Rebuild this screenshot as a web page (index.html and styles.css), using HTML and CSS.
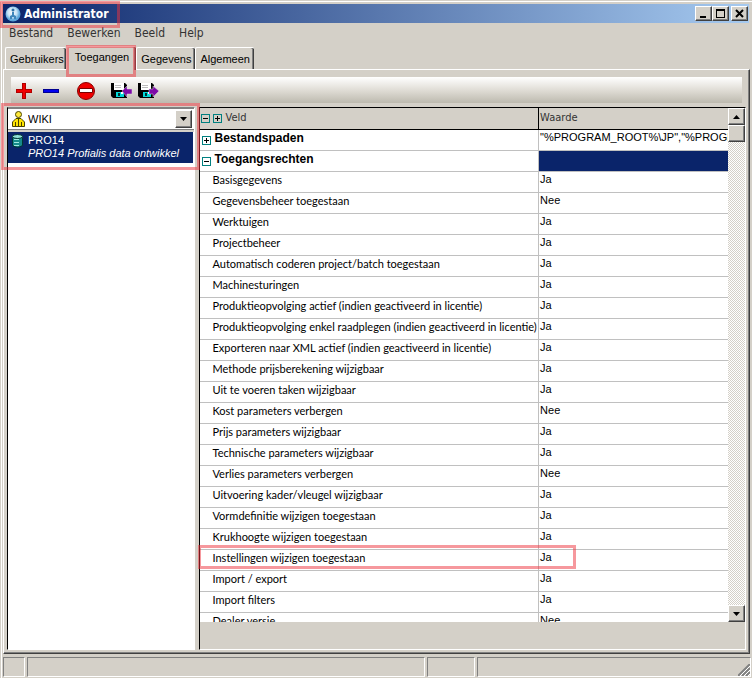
FILE: index.html
```html
<!DOCTYPE html>
<html lang="nl">
<head>
<meta charset="utf-8">
<title>Administrator</title>
<link rel="stylesheet" href="styles.css">
</head>
<body>
<div class="window">
  <header class="titlebar">
    <svg class="app-icon" width="16" height="16" viewBox="0 0 16 16"><defs><radialGradient id="orb" cx="45%" cy="40%"><stop offset="0" stop-color="#fff"/><stop offset=".6" stop-color="#c4e2f6"/><stop offset="1" stop-color="#5aa5da"/></radialGradient></defs><circle cx="8" cy="8" r="7.500" fill="url(#orb)"/><circle cx="8" cy="4" r="1.500" fill="#2b72a8"/><path d="M7 6h2v3l2 1v3H9v-2H7v2H5v-3l2-1z" fill="#3f86ba"/></svg>
    <h1>Administrator</h1>
    <div class="window-buttons">
      <button type="button" aria-label="Minimaliseren"><svg width="12" height="10" viewBox="0 0 12 10"><path d="M2 7h6v2H2z"/></svg></button>
      <button type="button" aria-label="Maximaliseren"><svg width="12" height="10" viewBox="0 0 12 10"><path d="M1 0h9v9H1zM2 2v6h7V2z" fill-rule="evenodd"/></svg></button>
      <button type="button" class="close" aria-label="Sluiten"><svg width="12" height="10" viewBox="0 0 12 10"><path d="M2 1l7 7M9 1L2 8" stroke="#000" stroke-width="2"/></svg></button>
    </div>
    <span class="mark mark-title"></span>
  </header>

  <nav class="menubar">
    <button type="button">Bestand</button>
    <button type="button">Bewerken</button>
    <button type="button">Beeld</button>
    <button type="button">Help</button>
  </nav>

  <div class="tabs" role="tablist">
    <button type="button" role="tab">Gebruikers</button>
    <button type="button" role="tab" class="active" aria-selected="true">Toegangen<span class="mark mark-tab"></span></button>
    <button type="button" role="tab">Gegevens</button>
    <button type="button" role="tab">Algemeen</button>
  </div>

  <main class="page">
    <div class="toolbar">
      <button type="button" aria-label="Toevoegen"><svg width="18" height="18" viewBox="0 0 18 18"><path d="M7 1h4v6h6v4h-6v6H7v-6H1V7h6z" fill="#b00000"/><path d="M8 2h2v6h6v2h-6v6H8v-6H2V8h6z" fill="#f00000"/></svg></button>
      <button type="button" aria-label="Verwijderen"><svg width="18" height="18" viewBox="0 0 18 18"><path d="M1 7h16v4H1z" fill="#000090"/><path d="M2 8h14v2H2z" fill="#0000f0"/></svg></button>
      <button type="button" class="spaced" aria-label="Blokkeren"><svg width="18" height="18" viewBox="0 0 18 18"><circle cx="9" cy="9" r="8.500" fill="#f00000" stroke="#8a0000"/><path d="M2.500 6.500h13v4h-13z" fill="#fff" stroke="#700"/></svg></button>
      <button type="button" class="spaced disk" aria-label="Importeren"><svg width="21" height="18" viewBox="0 0 21 18"><path d="M0 1h14l2 2v13H2l-2-2z" fill="#000"/><path d="M3 1h10v7H3z" fill="#fff"/><path d="M4 3h6v1H4zM4 5h6v1H4z" fill="#bbb"/><path d="M5 10h8v5H5z" fill="#00d8d8"/><path d="M7 11h2v3H7z" fill="#033"/><path d="M10 10h2v2h-2z" fill="#fff"/><path d="M11 9l5-5v3h5v5h-5v3z" fill="#7d0aa8" stroke="#ddd" stroke-width=".5"/></svg></button>
      <button type="button" class="disk" aria-label="Exporteren"><svg width="21" height="18" viewBox="0 0 21 18"><path d="M0 1h14l2 2v13H2l-2-2z" fill="#000"/><path d="M3 1h10v7H3z" fill="#fff"/><path d="M4 3h6v1H4zM4 5h6v1H4z" fill="#bbb"/><path d="M5 10h8v5H5z" fill="#00d8d8"/><path d="M7 11h2v3H7z" fill="#033"/><path d="M10 10h2v2h-2z" fill="#fff"/><path d="M21 9l-6-5v3h-4v5h4v3z" fill="#7d0aa8" stroke="#ddd" stroke-width=".5"/></svg></button>
    </div>

    <div class="panes">
      <aside class="side">
        <div class="combo">
          <svg class="user-icon" width="13" height="16" viewBox="0 0 13 16"><circle cx="6.500" cy="3.500" r="3" fill="#ffe93c" stroke="#4a4300"/><path d="M4 7.500h5L12.500 11v4.500H.5V11z" fill="#ffe400" stroke="#4a4300"/><path d="M3.500 11v4M9.500 11v4M6.500 8v7" stroke="#4a4300"/></svg>
          <select aria-label="Gebruiker"><option>WIKI</option></select>
          <span class="combo-arrow"><svg width="7" height="4" viewBox="0 0 7 4"><path d="M0 0h7L3.500 4z"/></svg></span>
        </div>
        <ul class="list">
          <li>
            <svg width="11" height="14" viewBox="0 0 11 14"><path d="M.5 2.500v9q5 3.500 10 0v-9z" fill="#168a8a" stroke="#033"/><ellipse cx="5.500" cy="2.500" rx="5" ry="2" fill="#8fe0d8" stroke="#033"/><path d="M2 5.500h5M2 8.500h5M2 11.500h5" stroke="#9fe8e0"/></svg>
            <div><span>PRO14</span><em>PRO14 Profialis data ontwikkel</em></div>
          </li>
        </ul>
        <span class="mark mark-side"></span>
      </aside>

      <section class="grid-pane">
        <div class="grid-view">
          <div class="grid-scroll">
            <table>
              <colgroup><col class="col-field"><col></colgroup>
              <thead>
                <tr><th scope="col"><button type="button" class="tree minus" aria-label="Alles inklappen"></button><button type="button" class="tree plus" aria-label="Alles uitklappen"></button>Veld</th><th scope="col">Waarde</th></tr>
              </thead>
              <tbody>
                <tr class="group"><td><button type="button" class="tree plus" aria-label="Uitklappen"></button>Bestandspaden</td><td>"%PROGRAM_ROOT%\JP","%PROGRAM_ROOT%"</td></tr>
                <tr class="group"><td><button type="button" class="tree minus" aria-label="Inklappen"></button>Toegangsrechten</td><td class="selected"></td></tr>
                <tr><td>Basisgegevens</td><td>Ja</td></tr>
                <tr><td>Gegevensbeheer toegestaan</td><td>Nee</td></tr>
                <tr><td>Werktuigen</td><td>Ja</td></tr>
                <tr><td>Projectbeheer</td><td>Ja</td></tr>
                <tr><td>Automatisch coderen project/batch toegestaan</td><td>Ja</td></tr>
                <tr><td>Machinesturingen</td><td>Ja</td></tr>
                <tr><td>Produktieopvolging actief (indien geactiveerd in licentie)</td><td>Ja</td></tr>
                <tr><td>Produktieopvolging enkel raadplegen (indien geactiveerd in licentie)</td><td>Ja</td></tr>
                <tr><td>Exporteren naar XML actief (indien geactiveerd in licentie)</td><td>Ja</td></tr>
                <tr><td>Methode prijsberekening wijzigbaar</td><td>Ja</td></tr>
                <tr><td>Uit te voeren taken wijzigbaar</td><td>Ja</td></tr>
                <tr><td>Kost parameters verbergen</td><td>Nee</td></tr>
                <tr><td>Prijs parameters wijzigbaar</td><td>Ja</td></tr>
                <tr><td>Technische parameters wijzigbaar</td><td>Ja</td></tr>
                <tr><td>Verlies parameters verbergen</td><td>Nee</td></tr>
                <tr><td>Uitvoering kader/vleugel wijzigbaar</td><td>Ja</td></tr>
                <tr><td>Vormdefinitie wijzigen toegestaan</td><td>Ja</td></tr>
                <tr><td>Krukhoogte wijzigen toegestaan</td><td>Ja</td></tr>
                <tr class="marked"><td>Instellingen wijzigen toegestaan<span class="mark mark-row"></span></td><td>Ja</td></tr>
                <tr><td>Import / export</td><td>Ja</td></tr>
                <tr><td>Import filters</td><td>Ja</td></tr>
                <tr><td>Dealer versie</td><td>Nee</td></tr>
              </tbody>
            </table>
          </div>
          <div class="scrollbar">
            <button type="button" aria-label="Omhoog"><svg width="7" height="4" viewBox="0 0 7 4"><path d="M0 4h7L3.500 0z"/></svg></button>
            <span class="thumb"></span>
            <button type="button" class="down" aria-label="Omlaag"><svg width="7" height="4" viewBox="0 0 7 4"><path d="M0 0h7L3.500 4z"/></svg></button>
          </div>
        </div>
      </section>
    </div>
  </main>

  <footer class="statusbar">
    <span></span><span></span><span></span><span></span>
    <svg class="grip" width="12" height="12" viewBox="0 0 12 12"><path d="M0 12L12 0M4 12l8-8M8 12l4-4" stroke="#808080" stroke-width="2"/><path d="M2 12L12 2M6 12l6-6M10 12l2-2" stroke="#fff"/></svg>
  </footer>
</div>
</body>
</html>
```

FILE: styles.css
```css
* { box-sizing: border-box; }

body {
  margin: 0;
  background: #d4d0c8;
  color: #000;
  font: 11px/13px "Liberation Sans", Arial, sans-serif;
}

button {
  margin: 0;
  padding: 0;
  border: 0;
  background: none;
  color: inherit;
  font: inherit;
}

svg { display: block; flex: none; }

.window {
  display: flex;
  flex-direction: column;
  height: 100vh;
  padding: 4px 0 0 3px;
  box-shadow: inset 0 1px #d4d0c8, inset 0 2px #fff, inset 1px 0 #d4d0c8, inset 2px 0 #fff;
}

.mark {
  position: absolute;
  border: 3px solid rgba(238, 50, 60, 0.5);
  pointer-events: none;
  z-index: 2;
}

/* Title bar */
.titlebar {
  position: relative;
  display: flex;
  flex: none;
  align-items: center;
  gap: 3px;
  height: 19px;
  margin-right: 3px;
  padding: 0 1px 0 2px;
  background: linear-gradient(to right, #0a246a, #a6caf0);
}

.titlebar h1 {
  flex: 1;
  margin: 0;
  color: #fff;
  font: bold 12px/18px "DejaVu Sans Condensed", Tahoma, sans-serif;
}

.window-buttons { display: flex; }

.window-buttons button,
.scrollbar button,
.thumb,
.combo-arrow {
  display: flex;
  align-items: center;
  justify-content: center;
  background: #d4d0c8;
  border: 1px solid;
  border-color: #fff #404040 #404040 #fff;
  box-shadow: inset -1px -1px #808080;
}

.window-buttons button { width: 17px; height: 15px; }
.window-buttons .close { margin-left: 2px; }

.mark-title { left: -3px; top: -3px; width: 120px; height: 27px; }

/* Menu */
.menubar {
  display: flex;
  flex: none;
  gap: 14px;
  height: 23px;
  padding: 1px 0 0 6px;
  color: #333;
  font: 12px/18px "DejaVu Sans Condensed", Tahoma, sans-serif;
}

.menubar button { height: 18px; }

/* Tabs */
.tabs {
  display: flex;
  flex: none;
  align-items: flex-end;
  height: 23px;
  padding-left: 2px;
  line-height: 20px;
}

.tabs button {
  position: relative;
  height: 22px;
  padding: 0 2px 0 4px;
  border: 1px solid #fff;
  border-width: 1px 0 0 1px;
  border-radius: 2px 2px 0 0;
  box-shadow: inset -1px 0 #404040, inset -2px 0 #808080;
}

.tabs .active {
  height: 24px;
  margin-bottom: -1px;
  padding: 0 7px 3px 8px;
  background: #d4d0c8;
  z-index: 1;
}

.tabs .active ~ button { padding: 0 4px; }

.mark-tab { inset: -2px 0 -7px -1px; }

/* Tab page */
.page {
  display: flex;
  flex: 1;
  flex-direction: column;
  min-height: 0;
  margin-right: 2px;
  border: 1px solid;
  border-color: #fff #404040 #404040 #fff;
  box-shadow: inset -1px -1px #808080;
  padding: 7px 3px 3px 3px;
}

.toolbar {
  display: flex;
  flex: none;
  align-items: center;
  gap: 9px;
  height: 26px;
  margin: 0 4px;
  padding: 2px 0 0 4px;
  background: linear-gradient(#fff, #e0ddd6 50%, #bdbaaf);
}

.toolbar .spaced { margin-left: 8px; }
.toolbar .disk { margin-left: 7px; }
.toolbar .disk + .disk { margin-left: -3px; }

.panes {
  display: grid;
  grid-template-columns: 189fr 548fr;
  flex: 1;
  gap: 4px;
  min-height: 0;
  margin-top: 4px;
}

/* User and database pane */
.side {
  position: relative;
  display: flex;
  flex-direction: column;
  border: 1px solid;
  border-color: #808080 #fff #fff #000;
  background: #fff;
}

.combo {
  position: relative;
  flex: none;
  height: 24px;
  border-bottom: 2px solid #d4d0c8;
  background: #fff;
}

.user-icon { position: absolute; left: 4px; top: 3px; }

.combo select {
  appearance: none;
  width: 100%;
  height: 22px;
  padding: 0 22px 0 20px;
  border: 1px solid #808080;
  border-width: 1px 0 1px 0;
  background: transparent;
  color: #000;
  font: 11px/20px "Liberation Sans", Arial, sans-serif;
}

.combo-arrow {
  position: absolute;
  right: 2px;
  top: 2px;
  width: 17px;
  height: 18px;
  pointer-events: none;
}

.list { margin: 0; padding: 0; list-style: none; }

.list li {
  display: flex;
  gap: 5px;
  height: 31px;
  margin-right: 1px;
  padding: 2px 0 0 4px;
  overflow: hidden;
  background: #0a246a;
  color: #fff;
  white-space: nowrap;
}

.list span, .list em { display: block; }

.mark-side { left: -7px; top: -5px; width: 199px; height: 67px; }

/* Rights grid */
.grid-pane {
  min-width: 0;
  min-height: 0;
  padding-bottom: 27px;
  border: 1px solid;
  border-color: #000 #fff #fff #000;
}

.grid-view { display: flex; height: 100%; }

.grid-scroll {
  position: relative;
  flex: 1;
  min-width: 0;
  overflow-x: visible;
  overflow-y: clip;
  background: #fff;
}

table { width: 100%; table-layout: fixed; border-collapse: separate; border-spacing: 0; }
.col-field { width: 64%; }

th, td {
  height: 21px;
  padding: 0 0 5px 12px;
  overflow: hidden;
  border-bottom: 1px solid #c0c0c0;
  line-height: 15px;
  text-align: left;
  white-space: nowrap;
}

td { font-family: Lato, "Liberation Sans", sans-serif; }

td + td {
  padding-left: 1px;
  border-left: 1px solid #c0c0c0;
  font-family: "Liberation Sans", Arial, sans-serif;
}

th {
  height: 22px;
  padding: 0 0 1px 1px;
  border-bottom-color: #000;
  background: #d4d0c8;
  color: #333;
  font: 11px/20px "DejaVu Sans Condensed", Tahoma, sans-serif;
}

th + th { border-left: 1px solid #000; }

.group td:first-child {
  padding: 0 0 3px 2px;
  font: bold 12px/17px "Liberation Sans", Arial, sans-serif;
}

.group .selected { background: #0a246a; }

.tree {
  display: inline-block;
  width: 9px;
  height: 9px;
  margin-right: 3px;
  border: 1px solid #008080;
  background: linear-gradient(#000, #000) center / 5px 1px no-repeat;
  vertical-align: -1px;
}

.group .tree { vertical-align: -2px; }

.plus {
  background:
    linear-gradient(#000, #000) center / 5px 1px no-repeat,
    linear-gradient(#000, #000) center / 1px 5px no-repeat;
}

.marked td:first-child { position: relative; overflow: visible; }
.mark-row { left: -2px; top: -5px; width: 378px; height: 24px; }

.scrollbar {
  display: flex;
  flex: none;
  flex-direction: column;
  width: 17px;
  background: repeating-conic-gradient(#fff 0 25%, #d4d0c8 0 50%) 0 0 / 2px 2px;
}

.scrollbar button, .thumb { width: 17px; height: 17px; }
.scrollbar .down { margin-top: auto; }

/* Status bar */
.statusbar {
  position: relative;
  display: grid;
  flex: none;
  grid-template-columns: 22px 399fr 48px 275fr;
  gap: 2px;
  height: 24px;
  padding: 3px 1px 1px 0;
}

.statusbar span { border: 1px solid; border-color: #808080 #fff #fff #808080; }
.grip { position: absolute; right: 2px; bottom: 2px; }
```
